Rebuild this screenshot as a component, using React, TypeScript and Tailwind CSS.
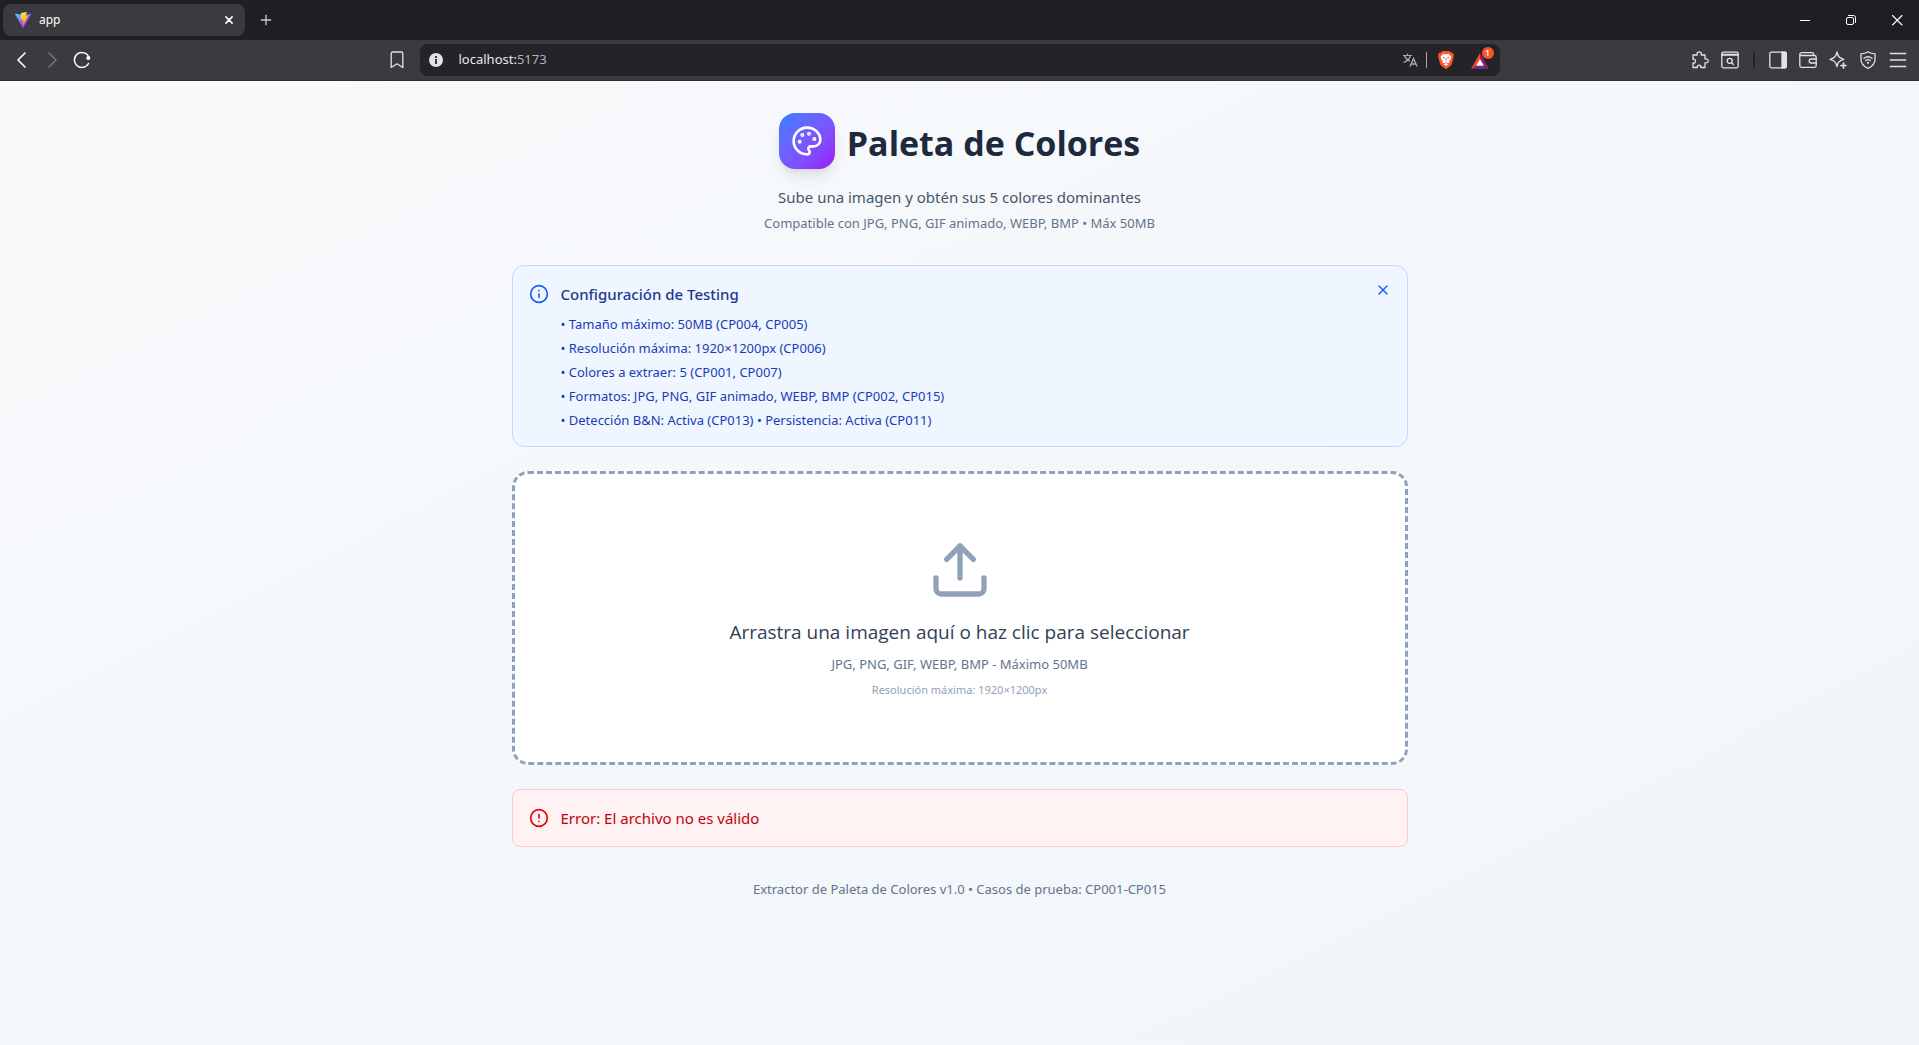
import React from 'react';
import { Palette, Upload, Info, CircleAlert, X, Plus } from 'lucide-react';

const testingNotes = [
  'Tamaño máximo: 50MB (CP004, CP005)',
  'Resolución máxima: 1920×1200px (CP006)',
  'Colores a extraer: 5 (CP001, CP007)',
  'Formatos: JPG, PNG, GIF animado, WEBP, BMP (CP002, CP015)',
  'Detección B&N: Activa (CP013) • Persistencia: Activa (CP011)',
];

function ViteLogo() {
  return (
    <svg viewBox="0 0 256 257" className="size-4" aria-hidden="true">
      <defs>
        <linearGradient id="viteA" x1="-.828%" x2="57.636%" y1="7.652%" y2="78.411%">
          <stop offset="0%" stopColor="#41D1FF" />
          <stop offset="100%" stopColor="#BD34FE" />
        </linearGradient>
        <linearGradient id="viteB" x1="43.376%" x2="50.316%" y1="2.242%" y2="89.03%">
          <stop offset="0%" stopColor="#FFEA83" />
          <stop offset="8.333%" stopColor="#FFDD35" />
          <stop offset="100%" stopColor="#FFA800" />
        </linearGradient>
      </defs>
      <path
        fill="url(#viteA)"
        d="M255.153 37.938L134.897 252.976c-2.483 4.44-8.862 4.466-11.382.048L.875 37.958c-2.746-4.814 1.371-10.646 6.827-9.67l120.385 21.517a6.537 6.537 0 0 0 2.322-.004l117.867-21.483c5.438-.991 9.574 4.796 6.877 9.62Z"
      />
      <path
        fill="url(#viteB)"
        d="M185.432.063L96.44 17.501a3.268 3.268 0 0 0-2.634 3.014l-5.474 92.456a3.268 3.268 0 0 0 3.997 3.378l24.777-5.718c2.318-.535 4.413 1.507 3.936 3.838l-7.361 36.047c-.495 2.426 1.782 4.5 4.151 3.78l15.304-4.649c2.372-.72 4.652 1.36 4.15 3.788l-11.698 56.621c-.732 3.542 3.979 5.473 5.943 2.437l1.313-2.028l72.516-144.72c1.215-2.423-.88-5.186-3.54-4.672l-25.505 4.922c-2.396.462-4.435-1.77-3.759-4.114l16.646-57.705c.677-2.35-1.37-4.583-3.769-4.113Z"
      />
    </svg>
  );
}

function Line({
  children,
  className = 'size-[18px]',
  width = 1.2,
}: {
  children: React.ReactNode;
  className?: string;
  width?: number;
}) {
  return (
    <svg
      viewBox="0 0 18 18"
      className={className}
      fill="none"
      stroke="currentColor"
      strokeWidth={width}
      strokeLinecap="round"
      strokeLinejoin="round"
      aria-hidden="true"
    >
      {children}
    </svg>
  );
}

function BarButton({ label, children, className = '' }: { label: string; children: React.ReactNode; className?: string }) {
  return (
    <button type="button" aria-label={label} className={'flex h-8 w-[30px] items-center justify-center ' + className}>
      {children}
    </button>
  );
}

function TabStrip() {
  return (
    <div className="flex h-10 items-center bg-[#1f1e23]">
      <div className="ml-[3px] flex h-8 w-[242px] items-center rounded-lg bg-[#3b3a3f] pl-3 pr-2">
        <ViteLogo />
        <span className="ml-2 flex-1 text-xs text-white">app</span>
        <button type="button" aria-label="Cerrar pestaña" className="flex size-4 items-center justify-center text-white">
          <Line className="size-4" width={1.8}>
            <path d="M5.5 5.500l7 7M12.500 5.500l-7 7" />
          </Line>
        </button>
      </div>
      <button type="button" aria-label="Nueva pestaña" className="ml-[13px] flex size-4 items-center justify-center text-[#c9c8cd]">
        <Plus className="size-4" strokeWidth={2} />
      </button>
      <div className="ml-auto flex text-white">
        <button type="button" aria-label="Minimizar" className="flex h-10 w-[46px] items-center justify-center pl-0.5">
          <Line width={1}>
            <path d="M4 9.5h10" strokeLinecap="butt" />
          </Line>
        </button>
        <button type="button" aria-label="Restaurar" className="flex h-10 w-[46px] items-center justify-center pl-0.5">
          <Line width={1}>
            <rect x="4.5" y="6.5" width="7" height="7" rx="1.5" />
            <path d="M6.5 4.5h5a2 2 0 0 1 2 2v5" />
          </Line>
        </button>
        <button type="button" aria-label="Cerrar" className="flex h-10 w-[46px] items-center justify-center pl-0.5">
          <Line width={1.1}>
            <path d="M4.5 4.5l9.500 9.500M14 4.500l-9.500 9.500" />
          </Line>
        </button>
      </div>
    </div>
  );
}

function AddressBar() {
  return (
    <div className="flex h-8 items-center rounded-lg bg-[#242328] pl-[9px] pr-[11px]">
      <svg viewBox="0 0 14 14" className="size-3.5 shrink-0" aria-hidden="true">
        <circle cx="7" cy="7" r="7" fill="#e3e2e8" />
        <rect x="6" y="3" width="2" height="2" fill="#3b3a3f" />
        <rect x="6" y="6" width="2" height="5" fill="#3b3a3f" />
      </svg>
      <span className="ml-4 flex-1 text-[13px] text-[#e8e7ec]">
        localhost:<span className="text-[#b4b3ba]">5173</span>
      </span>
      <button type="button" aria-label="Traducir" className="flex size-4 items-center justify-center text-[#a9a8af]">
        <svg viewBox="0 0 16 16" className="size-4" fill="none" stroke="currentColor" strokeWidth="1.200" aria-hidden="true">
          <path d="M1 3.500h9M5.500 1.500v2M2.500 3.500c.8 2.600 2.900 4.600 5.300 5.600M8.500 3.500C7.700 6.500 5 9.300 1.500 10.500" />
          <path d="M8 14.500l3.500-8 3.500 8M9.200 12h4.600" strokeWidth="1.400" />
        </svg>
      </button>
      <span className="ml-2 h-4 w-px bg-[#a9a8af]" />
      <button type="button" aria-label="Escudos de Brave" className="ml-[11px] flex h-[18px] w-4 items-center justify-center">
        <svg viewBox="0 0 16 18" className="h-[18px] w-4" aria-hidden="true">
          <path fill="#fb542b" d="M4.500 0h7l1.400 1.500 1.500-.1L16 3.400l-.5 1.500.3 1-2 7.200c-.3 1-.7 1.500-1.400 2L8.700 17.700c-.4.300-1 .300-1.400 0L3.600 15.100c-.7-.5-1.100-1-1.400-2L.2 5.900l.3-1L0 3.400l1.600-2 1.500.1z" />
          <path fill="#fff" d="M5.300 2.800L8 3.300l2.700-.5 2.700 2.900-.5 2.200-1.800 2.300.4 1.200-1 .9L8 11.200l-2.500 1.100-1-.9.4-1.200L3.100 7.900l-.5-2.200zM8 12l2.300 1.200L8 15l-2.300-1.800z" />
          <path fill="#fb542b" d="M4.500 6.100l2.500.5-.5.9-1.500-.3zM11.500 6.100L9 6.600l.5.9 1.500-.3zM7.600 7.500h.8l.3 1.800-.7.7-.7-.7z" />
        </svg>
      </button>
      <button type="button" aria-label="Brave Rewards, 1 novedad" className="relative ml-[17px] flex size-[18px] items-end justify-center">
        <svg viewBox="0 0 18 16" className="h-4 w-[18px]" aria-hidden="true">
          <path fill="#ff4724" d="M9 0L0 16l5.500-3.300L9 6.500z" />
          <path fill="#9e1f63" d="M9 0l9 16-5.500-3.300L9 6.500z" />
          <path fill="#662d91" d="M0 16h18l-5.500-3.300h-7z" />
          <path fill="#fff" d="M9 6l3.800 6.700H5.200z" />
        </svg>
        <span className="absolute -right-[5px] -top-[4px] flex size-3 items-center justify-center rounded-full bg-[#fb542b] text-[8px] font-semibold leading-none text-white">
          1
        </span>
      </button>
    </div>
  );
}

function Toolbar() {
  return (
    <div className="grid h-[41px] grid-cols-[minmax(180px,1fr)_minmax(0,1080px)_minmax(240px,1fr)] items-center border-b border-[#2e2d32] bg-[#3b3a3f] text-[#e3e2e8]">
      <div className="flex items-center pl-[7px] pr-2">
        <BarButton label="Atrás" className="text-white">
          <Line width={1.6}>
            <path d="M12 2L5 9l7 7" />
          </Line>
        </BarButton>
        <BarButton label="Adelante" className="text-[#7b7a80]">
          <Line width={1.4}>
            <path d="M6 2l7 7-7 7" />
          </Line>
        </BarButton>
        <BarButton label="Recargar" className="text-white">
          <Line width={1.5}>
            <path d="M16 6.500A7.500 7.500 0 1 0 15.500 12.500" />
            <circle cx="15.300" cy="7" r="2" fill="currentColor" stroke="none" />
          </Line>
        </BarButton>
        <BarButton label="Añadir a marcadores" className="ml-auto">
          <Line width={1.3}>
            <path d="M3.200 2.500c0-1 .5-1.500 1.500-1.500h8.600c1 0 1.500.5 1.500 1.500V16.500L9 12.800 3.200 16.500z" />
          </Line>
        </BarButton>
      </div>
      <AddressBar />
      <div className="flex items-center justify-end pr-[6px]">
        <BarButton label="Extensiones">
          <Line width={1.3}>
            <path d="M2 4h4.200c-.6-1.800.5-3.200 2-3.200S10.800 2.200 10.200 4H14v4c1.700-.5 3.200.5 3.200 1.900S15.700 12.300 14 11.800V16.500H9.800c.4-1.500-.5-2.400-1.700-2.400s-2.100.9-1.700 2.400H2V12c1.500.4 2.500-.5 2.500-1.800S3.500 7.900 2 8.300z" />
          </Line>
        </BarButton>
        <BarButton label="Buscar pestañas">
          <Line width={1.300}>
            <rect x=".8" y="1.200" width="16.400" height="15.600" rx="1.500" />
            <path d="M1 3.800h16" strokeWidth="2" />
            <circle cx="8.700" cy="9.800" r="2.500" />
            <path d="M10.600 11.700l1.800 1.800" />
          </Line>
        </BarButton>
        <span className="mx-2 h-4 w-0.5 bg-[#242328]" />
        <BarButton label="Barra lateral">
          <Line width={1.300}>
            <rect x=".8" y="1.200" width="16.400" height="15.600" rx="1.500" />
            <path d="M13 1.200h3.200q1 0 1 1v13.600q0 1-1 1H13z" fill="currentColor" />
          </Line>
        </BarButton>
        <BarButton label="Cartera">
          <Line width={1.300}>
            <path d="M14.500 4.500V3q0-1.300-1.300-1.300H3Q.8 1.700.8 3.600V14.500q0 1.800 1.800 1.800H15.400q1.800 0 1.800-1.800V6.300q0-1.800-1.800-1.800H2.500Q.8 4.500.8 3.200" />
            <path d="M17.200 8h-5q-2 0-2 2t2 2h5" />
          </Line>
        </BarButton>
        <BarButton label="Asistente Leo">
          <Line width={1.300}>
            <path d="M8 1c.9 4.200 2 6 6.800 7.300-3 .8-4.600 1.800-5.500 3.300-.6 1-.9 2.200-1.300 4C7 11.300 5.700 9.600 1 8.300 5.800 7 7.100 5.200 8 1z" />
            <path d="M14.500 12v5M12 14.500h5" strokeWidth="1.700" />
          </Line>
        </BarButton>
        <BarButton label="VPN">
          <Line width={1.300}>
            <path d="M9 .8c2 1.500 4.500 2 7 2V8c0 4.500-2.600 7.500-7 9.300C4.600 15.500 2 12.500 2 8V2.800c2.500 0 5-.5 7-2z" />
            <path d="M5 7.300c2.400-1.900 5.600-1.900 8 0M6.600 9.600c1.500-1.200 3.300-1.200 4.800 0" />
            <circle cx="9" cy="11.800" r="1.100" fill="currentColor" stroke="none" />
          </Line>
        </BarButton>
        <BarButton label="Menú">
          <Line width={1.700}>
            <path d="M.8 2.500h16.400M.8 9h16.400M.8 15.500h16.400" strokeLinecap="butt" />
          </Line>
        </BarButton>
      </div>
    </div>
  );
}

export default function App() {
  return (
    <div className="flex min-h-screen flex-col font-['Noto_Sans','Open_Sans',sans-serif]">
      <header>
        <TabStrip />
        <Toolbar />
      </header>
      <main className="flex-1 bg-gradient-to-br from-slate-50 to-slate-100 px-4 py-8">
        <div className="mx-auto max-w-4xl">
          <div className="mb-8 text-center">
            <div className="mb-4 flex items-center justify-center gap-3">
              <div className="rounded-2xl bg-gradient-to-br from-blue-500 to-purple-600 p-3 shadow-lg">
                <Palette className="size-8 text-white" />
              </div>
              <h1 className="pt-1 font-['Open_Sans','Noto_Sans',sans-serif] text-[34px] font-bold leading-10 text-slate-800">
                Paleta de Colores
              </h1>
            </div>
            <p className="text-[15px] leading-6 text-slate-600">Sube una imagen y obtén sus 5 colores dominantes</p>
            <p className="mt-1 text-[13px] leading-5 text-slate-500">
              Compatible con JPG, PNG, GIF animado, WEBP, BMP • Máx 50MB
            </p>
          </div>

          <section className="mb-6 flex items-start gap-3 rounded-xl border border-blue-200 bg-blue-50 p-4">
            <Info className="mt-0.5 size-5 shrink-0 text-blue-600" />
            <div className="flex-1">
              <h2 className="mb-2 text-[15px] font-medium leading-6 text-blue-900">Configuración de Testing</h2>
              <ul className="space-y-1 text-[13px] leading-5 text-blue-800">
                {testingNotes.map((note) => (
                  <li key={note}>• {note}</li>
                ))}
              </ul>
            </div>
            <button type="button" aria-label="Cerrar aviso" className="text-blue-600">
              <X className="size-4" />
            </button>
          </section>

          <button
            type="button"
            className="block w-full rounded-2xl border-3 border-dashed border-slate-400 bg-white p-16 text-center"
          >
            <Upload className="mx-auto mb-4 size-16 text-slate-400" />
            <span className="block font-['Open_Sans','Noto_Sans',sans-serif] text-[19px] leading-7 text-slate-700">
              Arrastra una imagen aquí o haz clic para seleccionar
            </span>
            <span className="mt-2 block text-[13px] leading-5 text-slate-500">JPG, PNG, GIF, WEBP, BMP - Máximo 50MB</span>
            <span className="mt-2 block text-[11px] leading-4 text-slate-400">Resolución máxima: 1920×1200px</span>
          </button>

          <div role="alert" className="mt-6 flex items-start gap-3 rounded-lg border border-red-200 bg-red-50 p-4">
            <CircleAlert className="mt-0.5 size-5 shrink-0 text-red-600" />
            <p className="text-[15px] leading-6 text-red-700">Error: El archivo no es válido</p>
          </div>

          <footer className="mt-8 text-center text-[13px] leading-5 text-slate-500">
            Extractor de Paleta de Colores v1.0 • Casos de prueba: CP001-CP015
          </footer>
        </div>
      </main>
    </div>
  );
}
